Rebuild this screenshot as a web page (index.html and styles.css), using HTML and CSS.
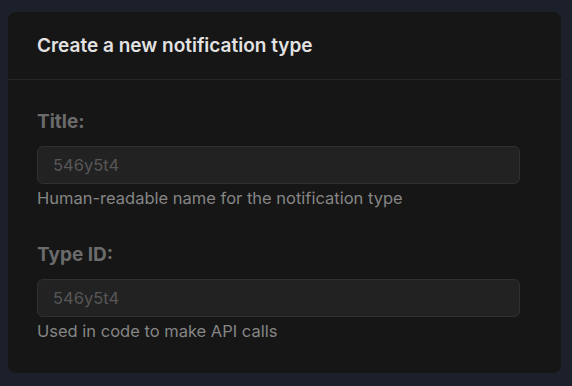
FILE: index.html
```html
<!DOCTYPE html>
<html>
<head>
<meta charset="utf-8">
<link rel="stylesheet" href="styles.css">
</head>
<body>
<div class="card">
  <div class="card-header">Create a new notification type</div>
  <div class="card-body">
    <div class="field">
      <label class="label">Title:</label>
      <input class="input" placeholder="546y5t4">
      <div class="help">Human-readable name for the notification type</div>
    </div>
    <div class="field">
      <label class="label">Type ID:</label>
      <input class="input" placeholder="546y5t4">
      <div class="help">Used in code to make API calls</div>
    </div>
  </div>
</div>
</body>
</html>
```
FILE: styles.css
```css
html, body {
  margin: 0;
  padding: 0;
  background: #1c202b;
  font-family: Inter, "Noto Sans", sans-serif;
}
body {
  padding: 12px 11px 13px 8px;
  height: 386px;
  box-sizing: border-box;
}
.card {
  background: #161616;
  border-radius: 8px;
  height: 361px;
  display: flex;
  flex-direction: column;
}
.card-header {
  height: 68px;
  box-sizing: border-box;
  padding: 0 29px 1px;
  display: flex;
  align-items: center;
  font-size: 19px;
  font-weight: 600;
  color: #e2e2e2;
  border-bottom: 1px solid #262626;
}
.card-body {
  padding: 30px 41px 0 29px;
  display: flex;
  flex-direction: column;
  gap: 34px;
}
.field {
  display: flex;
  flex-direction: column;
}
.label {
  font-size: 19px;
  font-weight: 700;
  color: #6b6b6b;
  line-height: 24px;
  margin-bottom: 12px;
}
.input {
  height: 38px;
  box-sizing: border-box;
  background: #222222;
  border: 1px solid #303030;
  border-radius: 6px;
  padding: 0 15px;
  font-family: Inter, "Noto Sans", sans-serif;
  font-size: 16.5px;
  color: #ddd;
  outline: none;
}
.input::placeholder {
  color: #575757;
}
.help {
  margin-top: 3px;
  font-size: 16.5px;
  line-height: 22px;
  color: #858585;
}
```
